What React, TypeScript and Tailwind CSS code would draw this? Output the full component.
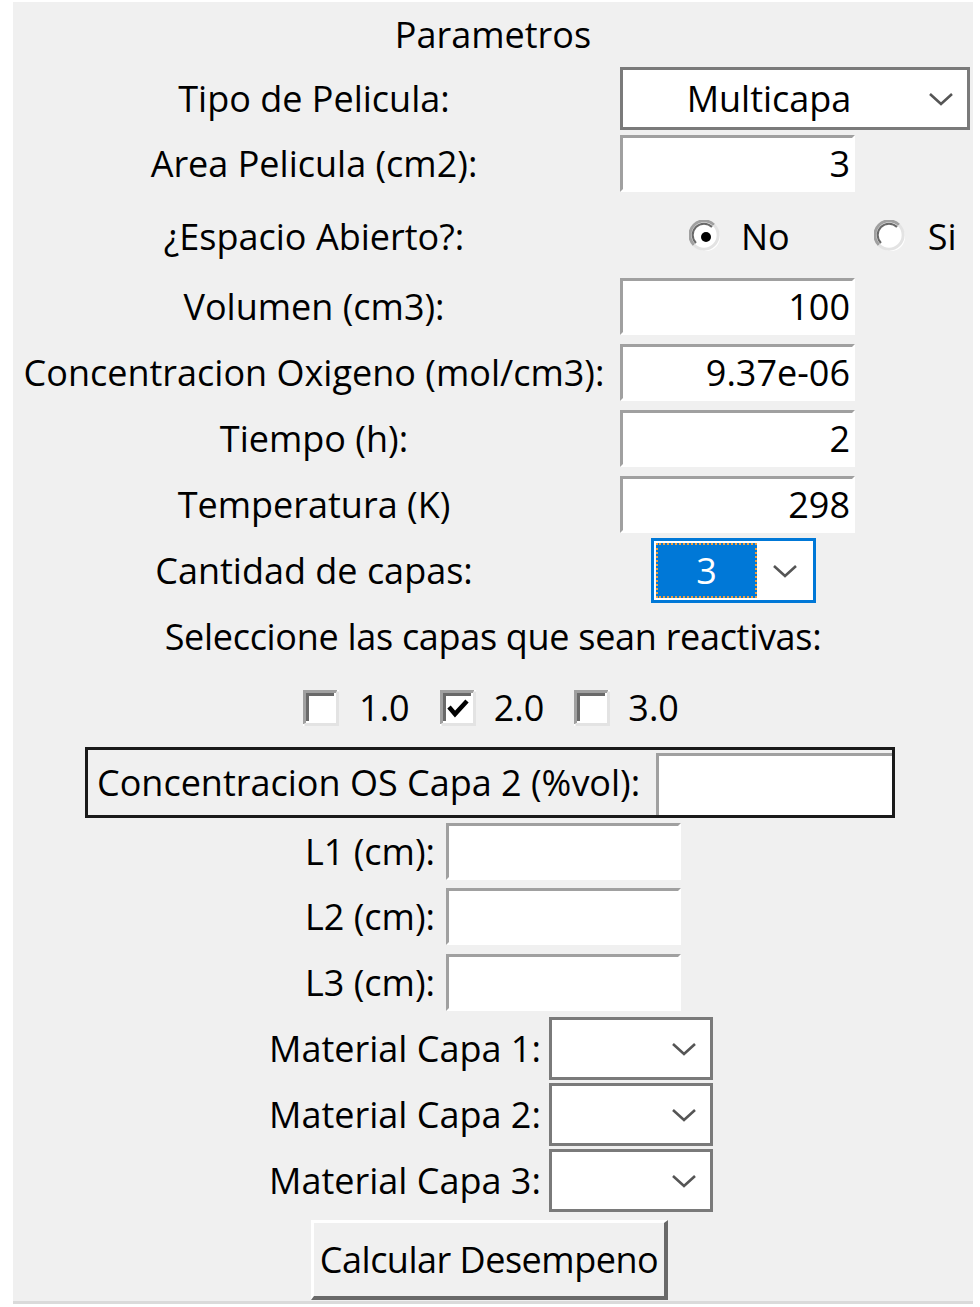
import type { ReactNode } from "react";

const font = { fontFamily: '"Open Sans", "Noto Sans", sans-serif' };

function Chevron() {
  return (
    <svg width="26" height="14" viewBox="0 0 26 14" className="shrink-0">
      <path d="M2 2 L13 12 L24 2" fill="none" stroke="#555" strokeWidth="2.6" />
    </svg>
  );
}

function Entry({ value = "", w = "w-[235px]" }: { value?: string; w?: string }) {
  return (
    <div
      className={`${w} h-[57px] shrink-0 bg-white border-t-[3px] border-l-[3px] border-r-[3px] border-b-[3px] border-t-[#a0a0a0] border-l-[#a0a0a0] border-r-white border-b-white flex items-center justify-end pr-[2px] text-[36px] leading-none`}
    >
      {value}
    </div>
  );
}

function Combo({ value = "", w }: { value?: string; w: string }) {
  return (
    <div className={`${w} h-[63px] shrink-0 bg-white border-[3px] border-[#7a7a7a] flex items-center`}>
      <div className="flex-1 text-center text-[36px] leading-none">{value}</div>
      <div className="w-[52px] flex justify-center">
        <Chevron />
      </div>
    </div>
  );
}

function Radio({ checked }: { checked?: boolean }) {
  return (
    <svg width="34" height="34" viewBox="0 0 34 34" className="shrink-0">
      <circle cx="17" cy="17" r="14" fill="#fff" />
      <path d="M5 25 A14 14 0 0 1 25 5" fill="none" stroke="#a0a0a0" strokeWidth="3" />
      <path d="M7 23 A11 11 0 0 1 23 7" fill="none" stroke="#696969" strokeWidth="2" />
      <path d="M25 5 A14 14 0 0 1 5 25" fill="none" stroke="#e3e3e3" strokeWidth="3" />
      {checked ? <circle cx="17" cy="17" r="5" fill="#000" /> : null}
    </svg>
  );
}

function Check({ checked }: { checked?: boolean }) {
  return (
    <svg width="36" height="36" viewBox="0 0 36 36" className="shrink-0">
      <rect x="0" y="0" width="36" height="36" fill="#fff" />
      <path d="M1.5 34 V1.5 H34" fill="none" stroke="#a0a0a0" strokeWidth="3" />
      <path d="M4.5 31 V4.5 H31" fill="none" stroke="#696969" strokeWidth="3" />
      <path d="M1.5 34.5 H34.5 V1.5" fill="none" stroke="#e3e3e3" strokeWidth="3" />
      {checked ? <path d="M9 17 L15 24 L27 11" fill="none" stroke="#000" strokeWidth="4.5" /> : null}
    </svg>
  );
}

function Row({ label, children, mt, h = "h-[57px]" }: { label: string; children: ReactNode; mt: string; h?: string }) {
  return (
    <div className={`${mt} ${h} flex items-center`}>
      <div className="w-[602px] text-center text-[36px] leading-none whitespace-nowrap">{label}</div>
      <div className="flex-1 flex items-center pl-[5px]">{children}</div>
    </div>
  );
}

export default function App() {
  return (
    <div className="w-[980px] h-[1307px] bg-white pt-[2px] pl-[13px] text-black" style={font}>
      <div className="w-[960px] h-[1302px] bg-[#f0f0f0] flex flex-col border-b-[3px] border-[#dadada]">
        <div className="h-[65px] flex items-center justify-center text-[36px] leading-none">Parametros</div>

        <Row label="Tipo de Pelicula:" mt="mt-0" h="h-[63px]">
          <Combo value="Multicapa" w="w-[350px]" />
        </Row>
        <Row label="Area Pelicula (cm2):" mt="mt-[5px]">
          <Entry value="3" />
        </Row>
        <Row label="¿Espacio Abierto?:" mt="mt-[17px]" h="h-[56px]">
          <div className="flex items-center ml-[69px]">
            <Radio checked />
            <span className="ml-[18px] text-[36px] leading-none">No</span>
          </div>
          <div className="flex items-center ml-[84px]">
            <Radio />
            <span className="ml-[20px] text-[36px] leading-none">Si</span>
          </div>
        </Row>
        <Row label="Volumen (cm3):" mt="mt-[13px]">
          <Entry value="100" />
        </Row>
        <Row label="Concentracion Oxigeno (mol/cm3):" mt="mt-[9px]">
          <Entry value="9.37e-06" />
        </Row>
        <Row label="Tiempo (h):" mt="mt-[9px]">
          <Entry value="2" />
        </Row>
        <Row label="Temperatura (K)" mt="mt-[9px]">
          <Entry value="298" />
        </Row>
        <Row label="Cantidad de capas:" mt="mt-[5px]" h="h-[65px]">
          <div className="ml-[31px] w-[165px] h-[65px] bg-white border-[3px] border-[#0078d7] flex items-center">
            <div className="ml-[2px] w-[101px] h-[55px] bg-[#0078d7] outline-dotted outline-2 outline-[#f0a040] -outline-offset-2 flex items-center justify-center text-white text-[36px] leading-none">
              3
            </div>
            <div className="flex-1 flex justify-center">
              <Chevron />
            </div>
          </div>
        </Row>

        <div className="mt-[9px] h-[50px] flex items-center justify-center text-[36px] leading-none tracking-[-0.3px]">
          Seleccione las capas que sean reactivas:
        </div>

        <div className="mt-[21px] h-[50px] pr-[4px] flex items-center justify-center text-[36px] leading-none">
          <Check />
          <span className="ml-[20px]">1.0</span>
          <span className="ml-[30px]" />
          <Check checked />
          <span className="ml-[18px]">2.0</span>
          <span className="ml-[30px]" />
          <Check />
          <span className="ml-[18px]">3.0</span>
        </div>

        <div className="mt-[14px] ml-[72px] w-[810px] h-[71px] border-[3px] border-[#1a1a1a] flex items-center">
          <div className="flex-1 pl-[9px] text-[36px] leading-none whitespace-nowrap">Concentracion OS Capa 2 (%vol):</div>
          <div className="w-[236px] h-[62px] mt-[3px] bg-white border-t-[3px] border-l-[3px] border-[#a0a0a0]" />
        </div>

        {[
          { l: "L1 (cm):", mt: "mt-[5px]" },
          { l: "L2 (cm):", mt: "mt-[8px]" },
          { l: "L3 (cm):", mt: "mt-[9px]" },
        ].map((r) => (
          <div key={r.l} className={`${r.mt} h-[57px] flex items-center justify-center`}>
            <span className="text-[36px] leading-none mr-[11px]">{r.l}</span>
            <Entry />
          </div>
        ))}

        {[
          { l: "Material Capa 1:", mt: "mt-[6px]" },
          { l: "Material Capa 2:", mt: "mt-[3px]" },
          { l: "Material Capa 3:", mt: "mt-[3px]" },
        ].map((r) => (
          <div key={r.l} className={`${r.mt} h-[63px] pr-[4px] flex items-center justify-center`}>
            <span className="text-[36px] leading-none mr-[8px]">{r.l}</span>
            <Combo w="w-[164px]" />
          </div>
        ))}

        <div className="mt-[8px] pr-[7px] flex justify-center">
          <button className="w-[357px] h-[80px] bg-[#f0f0f0] border-t-[3px] border-l-[3px] border-t-white border-l-white border-r-[4px] border-b-[4px] border-r-[#696969] border-b-[#696969] text-[36px] leading-none tracking-[-0.5px] whitespace-nowrap">
            Calcular Desempeno
          </button>
        </div>
      </div>
    </div>
  );
}
